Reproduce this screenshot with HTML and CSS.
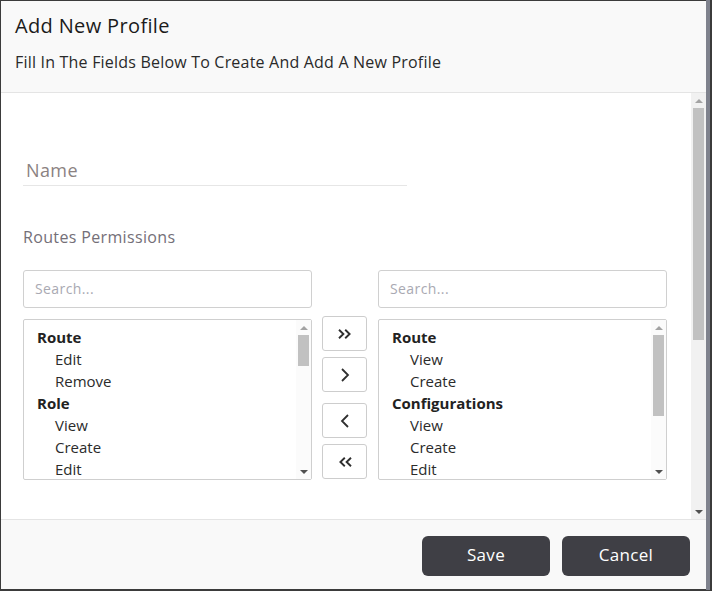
FILE: index.html
```html
<!DOCTYPE html>
<html>
<head>
<meta charset="utf-8">
<link rel="stylesheet" href="styles.css">
</head>
<body>
<div class="screen">
  <div class="dialog">
    <header class="dlg-head">
      <h1 class="dlg-title">Add New Profile</h1>
      <p class="dlg-sub">Fill In The Fields Below To Create And Add A New Profile</p>
    </header>
    <div class="dlg-body">
      <div class="content">
        <input class="name-input" type="text" placeholder="Name">
        <div class="section-label">Routes Permissions</div>
        <div class="dual">
          <div class="col">
            <input class="search" type="text" placeholder="Search...">
            <div class="listbox">
              <div class="items">
                <div class="grp">Route</div>
                <div class="opt">Edit</div>
                <div class="opt">Remove</div>
                <div class="grp">Role</div>
                <div class="opt">View</div>
                <div class="opt">Create</div>
                <div class="opt">Edit</div>
              </div>
              <div class="vscroll small">
                <div class="arrow up"><span class="tri-up"></span></div>
                <div class="track"><div class="thumb" style="height:31px"></div></div>
                <div class="arrow down"><span class="tri-down"></span></div>
              </div>
            </div>
          </div>
          <div class="actions">
            <button class="mv" type="button" aria-label="Move all right">
              <svg width="16" height="14" viewBox="0 0 16 14"><path d="M2 2.7l4.4 4.3L2 11.3M8.2 2.7L12.6 7l-4.4 4.3" fill="none" stroke="#2f2f2f" stroke-width="1.9"/></svg>
            </button>
            <button class="mv" type="button" aria-label="Move right">
              <svg width="16" height="14" viewBox="0 0 16 14"><path d="M5 1l6 6-6 6" fill="none" stroke="#2f2f2f" stroke-width="1.8"/></svg>
            </button>
            <button class="mv mv-gap" type="button" aria-label="Move left">
              <svg width="16" height="14" viewBox="0 0 16 14"><path d="M11 1L5 7l6 6" fill="none" stroke="#2f2f2f" stroke-width="1.8"/></svg>
            </button>
            <button class="mv" type="button" aria-label="Move all left">
              <svg width="16" height="14" viewBox="0 0 16 14"><path d="M7.8 2.7L3.4 7l4.4 4.3M14 2.7L9.6 7l4.4 4.3" fill="none" stroke="#2f2f2f" stroke-width="1.9"/></svg>
            </button>
          </div>
          <div class="col">
            <input class="search" type="text" placeholder="Search...">
            <div class="listbox">
              <div class="items">
                <div class="grp">Route</div>
                <div class="opt">View</div>
                <div class="opt">Create</div>
                <div class="grp">Configurations</div>
                <div class="opt">View</div>
                <div class="opt">Create</div>
                <div class="opt">Edit</div>
              </div>
              <div class="vscroll small">
                <div class="arrow up"><span class="tri-up"></span></div>
                <div class="track"><div class="thumb" style="height:81px"></div></div>
                <div class="arrow down"><span class="tri-down"></span></div>
              </div>
            </div>
          </div>
        </div>
      </div>
      <div class="vscroll main">
        <div class="arrow up"><span class="tri-up"></span></div>
        <div class="track"><div class="thumb" style="height:232px"></div></div>
        <div class="arrow down"><span class="tri-down"></span></div>
      </div>
    </div>
    <footer class="dlg-foot">
      <button class="btn" type="button">Save</button>
      <button class="btn" type="button">Cancel</button>
    </footer>
  </div>
  <div class="strip"></div>
</div>
</body>
</html>
```

FILE: styles.css
```css
* { box-sizing: border-box; }
html, body { margin: 0; padding: 0; }
body {
  background: #3b3b3b;
  font-family: "Open Sans", "Liberation Sans", sans-serif;
  width: 712px;
  height: 591px;
  overflow: hidden;
}
.screen {
  display: flex;
  padding: 1px 0 0 1px;
}
.dialog {
  width: 705px;
  height: 588px;
  display: flex;
  flex-direction: column;
  background: #fff;
}
.strip {
  width: 4px;
  height: 590px;
  margin-top: -1px;
  background: #7f828d;
}
.dlg-head {
  height: 92px;
  flex: none;
  background: #f9f9f9;
  border-bottom: 1px solid #e4e4e4;
  padding: 12px 14px 0;
}
.dlg-title {
  margin: 0;
  font-size: 20px;
  font-weight: 400;
  line-height: 26px;
  letter-spacing: 0.35px;
  color: #1b1b1b;
}
.dlg-sub {
  margin: 11px 0 0;
  font-size: 16px;
  line-height: 24px;
  letter-spacing: 0.2px;
  color: #2a2a2a;
}
.dlg-body {
  height: 426px;
  flex: none;
  display: flex;
}
.content {
  flex: 1;
  overflow: hidden;
  padding: 58px 24px 0 22px;
}
.name-input {
  display: block;
  width: 384px;
  height: 35px;
  border: 0;
  border-bottom: 1px solid #e6e6e6;
  padding: 4px 3px 0;
  font-family: inherit;
  font-size: 18px;
  letter-spacing: 0.4px;
  outline: none;
  background: transparent;
}
.name-input::placeholder { color: #8b8282; }
.section-label {
  margin-top: 39px;
  line-height: 24px;
  font-size: 16px;
  letter-spacing: 0.35px;
  color: #746f78;
}
.dual {
  margin-top: 21px;
  display: flex;
  align-items: flex-start;
}
.col {
  width: 289px;
  display: flex;
  flex-direction: column;
  gap: 11px;
}
.search {
  height: 38px;
  border: 1px solid #d0d0d0;
  border-radius: 3px;
  padding: 0 11px 1px;
  font-family: inherit;
  font-size: 14px;
  letter-spacing: 0.4px;
  outline: none;
}
.search::placeholder { color: #a9a9b2; }
.listbox {
  height: 161px;
  border: 1px solid #cfcfcf;
  border-radius: 2px;
  display: flex;
}
.items {
  flex: 1;
  overflow: hidden;
  padding: 6px 0 0 13px;
  font-size: 15px;
  line-height: 22px;
  color: #2b2b2b;
}
.grp { font-weight: 700; color: #222; }
.opt { padding-left: 18px; }
.vscroll {
  width: 15px;
  flex: none;
  display: flex;
  flex-direction: column;
  background: #f1f1f1;
}
.vscroll.small { background: #fbfbfb; }
.arrow {
  height: 15px;
  flex: none;
  display: flex;
  align-items: center;
  justify-content: center;
}
.track {
  flex: 1;
  padding: 0 2px;
}
.thumb { background: #c1c1c1; }
.tri-up {
  width: 0; height: 0;
  border-left: 4px solid transparent;
  border-right: 4px solid transparent;
  border-bottom: 4px solid #a3a3a3;
}
.tri-down {
  width: 0; height: 0;
  border-left: 4px solid transparent;
  border-right: 4px solid transparent;
  border-top: 4px solid #505050;
}
.actions {
  width: 45px;
  margin: 46px 11px 0 10px;
  display: flex;
  flex-direction: column;
  gap: 6px;
}
.mv {
  width: 45px;
  height: 35px;
  border: 1px solid #cdcdcd;
  border-radius: 3px;
  background: #fff;
  display: flex;
  align-items: center;
  justify-content: center;
  padding: 0;
}
.mv-gap { margin-top: 5px; }
.dlg-foot {
  flex: 1;
  background: #f9f9f9;
  border-top: 1px solid #e4e4e4;
  display: flex;
  justify-content: flex-end;
  align-items: flex-start;
  gap: 12px;
  padding: 16px 16px 0;
}
.btn {
  width: 128px;
  height: 40px;
  border: 0;
  border-radius: 6px;
  background: #3f3f45;
  color: #fff;
  font-family: inherit;
  font-size: 17px;
  letter-spacing: 0.3px;
  padding: 0 0 3px;
}
```
